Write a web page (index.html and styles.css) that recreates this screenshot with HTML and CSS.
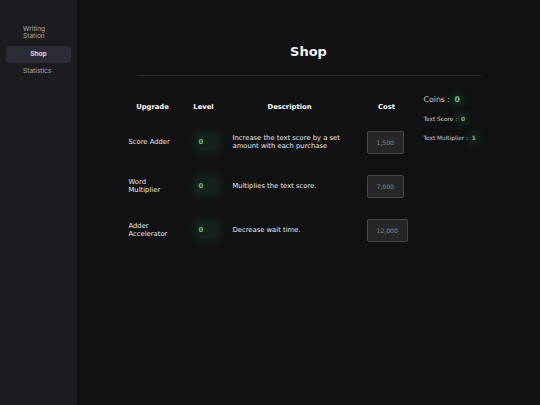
FILE: index.html
```html
<!DOCTYPE html>
<html lang="en">
<head>
<meta charset="utf-8">
<title>Shop</title>
<link rel="stylesheet" href="styles.css">
</head>
<body>
<div class="app">
  <nav class="sidebar">
    <a class="nav-item">Writing Station</a>
    <a class="nav-item active">Shop</a>
    <a class="nav-item">Statistics</a>
  </nav>
  <main class="main">
    <h1 class="title">Shop</h1>
    <hr class="rule">
    <div class="content">
      <table class="shop">
        <colgroup>
          <col class="c1"><col class="c2"><col class="c3"><col class="c4">
        </colgroup>
        <thead>
          <tr><th>Upgrade</th><th>Level</th><th>Description</th><th>Cost</th></tr>
        </thead>
        <tbody>
          <tr>
            <td class="name">Score Adder</td>
            <td class="lvl"><span class="badge">0</span></td>
            <td class="desc">Increase the text score by a set amount with each purchase</td>
            <td class="cost"><button class="buy">1,500</button></td>
          </tr>
          <tr>
            <td class="name">Word Multiplier</td>
            <td class="lvl"><span class="badge">0</span></td>
            <td class="desc">Multiplies the text score.</td>
            <td class="cost"><button class="buy">7,000</button></td>
          </tr>
          <tr>
            <td class="name">Adder Accelerator</td>
            <td class="lvl"><span class="badge">0</span></td>
            <td class="desc">Decrease wait time.</td>
            <td class="cost"><button class="buy">12,000</button></td>
          </tr>
        </tbody>
      </table>
      <aside class="stats">
        <div class="stat coins">Coins :&nbsp;<span class="val">0</span></div>
        <div class="stat">Text Score :&nbsp;<span class="val">0</span></div>
        <div class="stat">Text Multiplier :&nbsp;<span class="val">1</span></div>
      </aside>
    </div>
  </main>
</div>
</body>
</html>
```

FILE: styles.css
```css
html, body {
  margin: 0;
  padding: 0;
  height: 100%;
  background: #111113;
}
body {
  font-family: "DejaVu Sans", Verdana, sans-serif;
  color: #e6e6e6;
}
.app {
  display: flex;
  height: 405px;
}
.sidebar {
  width: 77px;
  flex: none;
  background: #1b1b20;
  display: flex;
  flex-direction: column;
  padding: 26px 6px 0;
  box-sizing: border-box;
  font-family: Inter, "Noto Sans", sans-serif;
  font-size: 6.6px;
  color: #a9a9b0;
}
.nav-item {
  display: block;
  padding: 0 17px;
  line-height: 7.4px;
}
.nav-item + .nav-item {
  margin-top: 5px;
}
.nav-item.active {
  background: #2c2c36;
  border-radius: 4px;
  color: #e4e4ea;
  font-weight: 600;
  text-align: center;
  line-height: 17px;
  padding: 0;
}
.main {
  flex: 1;
  display: flex;
  flex-direction: column;
  align-items: center;
  padding-top: 44px;
}
.title {
  margin: 0;
  font-size: 13px;
  line-height: 16px;
  font-weight: bold;
  color: #f2f2f2;
}
.rule {
  width: 344px;
  margin: 15px 0 0;
  border: 0;
  border-top: 1px solid #2a2a2d;
  height: 0;
}
.content {
  display: flex;
  gap: 4px;
  margin-top: 18px;
  padding-right: 4px;
  align-items: flex-start;
}
.shop {
  border-collapse: collapse;
  table-layout: fixed;
  width: 296px;
  font-size: 6.8px;
}
.c1 { width: 58px; }
.c2 { width: 44px; }
.c3 { width: 128px; }
.c4 { width: 66px; }
.shop th {
  height: 26px;
  padding: 0;
  font-weight: bold;
  color: #ffffff;
  text-align: center;
  vertical-align: middle;
}
.shop td {
  height: 44px;
  padding: 0;
  vertical-align: middle;
  line-height: 8px;
  color: #e8e8e8;
}
.shop td.name {
  padding-left: 5px;
  padding-right: 6px;
}
.shop td.lvl {
  padding-left: 14px;
}
.shop td.desc {
  padding-left: 7px;
  padding-right: 7px;
}
.shop td.cost {
  padding-left: 13px;
}
.badge {
  display: block;
  width: 22px;
  height: 16px;
  box-sizing: border-box;
  padding-left: 3px;
  line-height: 16px;
  font-weight: bold;
  color: #63c27f;
  background: rgba(45, 120, 70, 0.16);
  border-radius: 3px;
  box-shadow: 0 0 8px 3px rgba(40, 140, 75, 0.16);
}
.buy {
  font-family: "DejaVu Sans", Verdana, sans-serif;
  font-size: 6.1px;
  line-height: 7px;
  padding: 7px 9px;
  background: #262627;
  color: #8a8a8a;
  border: 1px solid #464648;
  border-radius: 2px;
  margin: 0;
}
.stats {
  width: 66px;
  display: flex;
  flex-direction: column;
  gap: 7px;
  font-size: 5.8px;
  color: #cfcfcf;
}
.stat {
  height: 12px;
  line-height: 12px;
  white-space: nowrap;
}
.stat.coins {
  font-size: 7.8px;
  color: #c8c8c8;
}
.val {
  display: inline-block;
  padding: 0 2px;
  line-height: 9px;
  font-weight: bold;
  color: #66c884;
  background: rgba(45, 120, 70, 0.14);
  border-radius: 2px;
  box-shadow: 0 0 6px 2px rgba(40, 140, 75, 0.16);
}
```
